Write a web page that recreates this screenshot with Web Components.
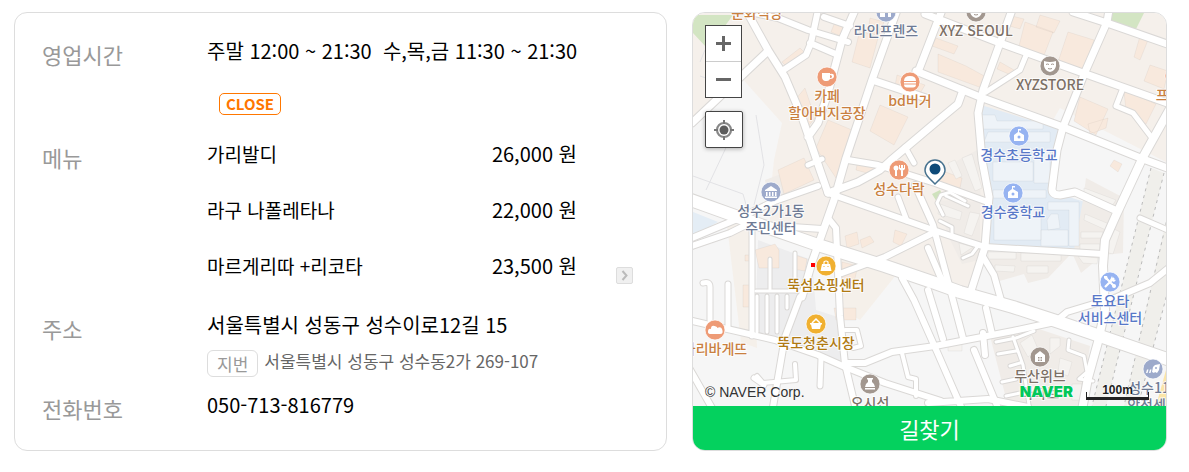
<!DOCTYPE html>
<html lang="ko">
<head>
<meta charset="utf-8">
<meta name="viewport" content="width=device-width, initial-scale=1">
<title>매장 정보</title>
<style>
    body {
        margin: 0;
        padding: 12px 22px 12px 14px;
        background: #fff;
        color: #000;
        font-family: "Noto Sans CJK KR", sans-serif;
    }
</style>
</head>
<body>
<shop-page>
    <shop-card slot="info">
        <info-row label="영업시간" space="25">
            <opening-hours status="CLOSE">주말 12:00 ~ 21:30 &nbsp;수,목,금 11:30 ~ 21:30</opening-hours>
        </info-row>
        <info-row label="메뉴" space="27"><menu-list></menu-list></info-row>
        <info-row label="주소" space="14">
            <shop-address lot="서울특별시 성동구 성수동2가 269-107">서울특별시 성동구 성수이로12길 15</shop-address>
        </info-row>
        <info-row label="전화번호">050-713-816779</info-row>
    </shop-card>
    <map-card slot="map"></map-card>
</shop-page>

<script>
class ShopPage extends HTMLElement {
    constructor() {
        super();
        this.attachShadow({ mode: 'open' }).innerHTML = `
        <style>
            :host { display: grid; grid-template-columns: 653fr 475fr; gap: 25px; }
        </style>
        <slot name="info"></slot><slot name="map"></slot>`;
    }
}
customElements.define('shop-page', ShopPage);

class ShopCard extends HTMLElement {
    constructor() {
        super();
        this.attachShadow({ mode: 'open' }).innerHTML = `
        <style>
            :host {
                display: block;
                box-sizing: border-box;
                padding: 24px 27px;
                border: 1px solid #ddd;
                border-radius: 13px;
            }
        </style>
        <slot></slot>`;
    }
}
customElements.define('shop-card', ShopCard);

class InfoRow extends HTMLElement {
    constructor() {
        super();
        this.attachShadow({ mode: 'open' }).innerHTML = `
        <style>
            :host {
                display: grid;
                grid-template-columns: 165px 1fr;
                font-size: 20px;
                line-height: 28px;
            }
            .label { font-size: 22px; line-height: 34px; color: #999; }
        </style>
        <div class="label" id="label"></div>
        <div role="group" aria-labelledby="label"><slot></slot></div>`;
    }
    connectedCallback() {
        this.shadowRoot.getElementById('label').textContent = this.getAttribute('label');
        this.style.marginBottom = (this.getAttribute('space') || 0) + 'px';
    }
}
customElements.define('info-row', InfoRow);

class OpeningHours extends HTMLElement {
    constructor() {
        super();
        this.attachShadow({ mode: 'open' }).innerHTML = `
        <style>
            :host { display: flex; flex-direction: column; align-items: flex-start; gap: 28px; }
            .status {
                margin-left: 12px;
                padding: 0 6px;
                border: 1px solid #f70;
                border-radius: 5px;
                color: #f70;
                font-size: 15px;
                font-weight: 700;
                line-height: 20px;
            }
        </style>
        <div><slot></slot></div>
        <div class="status"></div>`;
    }
    connectedCallback() {
        this.shadowRoot.querySelector('.status').textContent = this.getAttribute('status');
    }
}
customElements.define('opening-hours', OpeningHours);

class MenuList extends HTMLElement {
    constructor() {
        super();
        const items = [['가리발디', '26,000 원'], ['라구 나폴레타나', '22,000 원'], ['마르게리따 +리코타', '23,500 원']];
        this.attachShadow({ mode: 'open' }).innerHTML = `
        <style>
            :host { display: flex; align-items: flex-end; gap: 39px; }
            table { flex: 0 1 370px; border-collapse: collapse; margin-bottom: 4px; }
            th, td { padding: 0 0 28px; font-weight: 400; text-align: left; }
            th { font-size: 19px; }
            tr:last-child > * { padding-bottom: 0; }
            td { text-align: right; }
            button {
                display: grid;
                place-items: center;
                width: 17px;
                height: 17px;
                padding: 0;
                border: 1px solid #ddd;
                border-radius: 2px;
                background: #f0f0f0;
            }
        </style>
        <table><tbody>${items.map(([name, price]) => `<tr><th scope="row">${name}</th><td>${price}</td></tr>`).join('')}</tbody></table>
        <button type="button" aria-label="메뉴 더보기">
            <svg width="15" height="15" viewBox="0 0 15 15"><path d="M5.5 3l4 4.5-4 4.5" fill="none" stroke="#bbb" stroke-width="2"/></svg>
        </button>`;
    }
}
customElements.define('menu-list', MenuList);

class ShopAddress extends HTMLElement {
    constructor() {
        super();
        this.attachShadow({ mode: 'open' }).innerHTML = `
        <style>
            :host { display: block; }
            .lot { display: flex; gap: 6px; margin-top: 11px; font-size: 17px; line-height: 25px; }
            .tag { padding: 0 9px; border: 1px solid #ddd; border-radius: 6px; color: #999; }
            .text { line-height: 22px; color: #666; }
        </style>
        <slot></slot>
        <div class="lot"><span class="tag">지번</span><span class="text"></span></div>`;
    }
    connectedCallback() {
        this.shadowRoot.querySelector('.text').textContent = this.getAttribute('lot');
    }
}
customElements.define('shop-address', ShopAddress);

class MapCard extends HTMLElement {
    constructor() {
        super();
        this.attachShadow({ mode: 'open' }).innerHTML = `
        <style>
            :host {
                display: flex;
                flex-direction: column;
                box-sizing: border-box;
                overflow: hidden;
                border: 1px solid #ddd;
                border-radius: 13px;
            }
            .map { display: grid; flex: 1; }
            .map > * { grid-area: 1 / 1; }
            map-controls { place-self: start; margin: 12px; }
            map-legend { align-self: end; }
            .route {
                height: 44px;
                padding: 0;
                border: 0;
                background: #04d15e;
                color: #fff;
                font: 22px/44px "Noto Sans CJK KR", sans-serif;
            }
        </style>
        <div class="map">
            <street-map></street-map>
            <map-controls></map-controls>
            <map-legend></map-legend>
        </div>
        <button class="route" type="button">길찾기</button>`;
    }
}
customElements.define('map-card', MapCard);

class MapControls extends HTMLElement {
    constructor() {
        super();
        this.attachShadow({ mode: 'open' }).innerHTML = `
        <style>
            :host { display: grid; gap: 13px; }
            .zoom { width: 35px; border: 1px solid #444; background: #fff; }
            button { display: grid; place-items: center; padding: 0; border: 0; background: #fff; }
            .zoom button { width: 35px; height: 35px; }
            .zoom button + button { border-top: 1px solid #ccc; height: 36px; }
            .locate { width: 38px; height: 37px; border: 1px solid #444; border-radius: 2px; box-shadow: 0 1px 4px rgba(0, 0, 0, .3); }
        </style>
        <div class="zoom">
            <button type="button" aria-label="확대"><svg width="15" height="15"><path d="M0 7.5h15M7.5 0v15" stroke="#666" stroke-width="3"/></svg></button>
            <button type="button" aria-label="축소"><svg width="15" height="15"><path d="M0 7.5h15" stroke="#666" stroke-width="3"/></svg></button>
        </div>
        <button class="locate" type="button" aria-label="현재 위치">
            <svg width="20" height="20" viewBox="0 0 20 20">
                <circle cx="10" cy="10" r="7" fill="none" stroke="#888" stroke-width="2.200"/>
                <circle cx="10" cy="10" r="4.500" fill="#5c5c5c"/>
                <path d="M10 0v4M10 16v4M0 10h4M16 10h4" stroke="#777" stroke-width="2"/>
            </svg>
        </button>`;
    }
}
customElements.define('map-controls', MapControls);

class MapLegend extends HTMLElement {
    constructor() {
        super();
        this.attachShadow({ mode: 'open' }).innerHTML = `
        <style>
            :host { display: flex; align-items: center; padding: 0 17px 4px 12px; font-family: "Liberation Sans", Arial, sans-serif; color: #333; }
            .copy { flex: 1; font-size: 14px; line-height: 20px; text-shadow: 0 0 2px #fff; }
            .logo {
                margin-right: 13px;
                color: #03c75a;
                font: 900 15px/20px Inter, sans-serif;
                text-shadow: 0 0 1px #fff, 0 0 2px #fff, 0 0 2px #fff, 0 0 3px #fff;
            }
            .scale {
                box-sizing: border-box;
                width: 63px;
                text-align: center;
                font-size: 12px;
                font-weight: 700;
                line-height: 12px;
                color: #222;
                text-shadow: 0 0 2px #fff, 0 0 2px #fff;
            }
            .bar { box-sizing: border-box; height: 8px; margin-top: -4px; border: solid #222; border-width: 0 1px 3px; }
        </style>
        <span class="copy">© NAVER Corp.</span>
        <span class="logo">NAVER</span>
        <div class="scale">100m<div class="bar"></div></div>`;
    }
}
customElements.define('map-legend', MapLegend);

// [width, path], minor roads first so the wide ones run over them
const ROADS = [
    [3, 'M943 215l-6-12 4-8 10-3M946 196l22 10M951 193l14 8M940 221l12 6v8M978 246l-6 8-9 4'],
    [3, 'M756 291h45M757 296v12M767 296v12M777 296v12M787 296v12M757 302v30M767 302v30M777 302v30M770 259v30M795 253v38'],
    [3, 'M996 342l20-4 18-7M998 354l18-3M1002 382l14-3M1006 396l14-3M1013 337l10 28 6 40M1069 340l-1 10 16 6 3 16-8 7 14 2M1010 366l10-3'],
    [4, 'M845 330h12l4 16-8 2M902 353l6 24 8 2v17M757 376l6 7 33-3-1-16'],
    [5, 'M703 283q7-2 7 4v33M728 284v44M821 358l-1 28M754 378l10 7M752 228v108'],
    [6, 'M740 10l38 8 30 12 40 12M818 10l-7 33-5 12-24 16M810 43l28 12M824 17l26 9'],
    [5, 'M1027 53l-7 17-34 22M1123 88l-7 18 17 7 19 25M808 165l14-6M905 147l9 16M898 197l9 24M1140 218l30 13'],
    [6, 'M792 227l30 2M828 218l8 10 1 22 3 66 5 48 11 46M933 233l-48 24-43 16M800 297l-15 40-12 70'],
    [6, 'M692 246l38-13 22-11M915 185l18 40 16 60 14 53M928 248l15 35M928 290l15 49M982 255l12 20 7 25M986 308l6 26M983 333l2 22M974 350l24 58'],
    [6, 'M902 278l12 22 24 54 24 55M688 366l24 42M928 403l60-4 40 8'],
    [6, 'M688 320l87 20 43 15 27 12 40 16 56 18M845 363h20l27-11 43-6 78-15 42-9 12-10 50-15 33-14 20-16'],
    [7, 'M692 123l76-72M746 10l22 40 17 27 17 40 18 53 8 23M855 10l-13 30-14 53-10 30-10 14'],
    [7, 'M897 10l-25 70-26 78-12 42-12 34-10 28-10 35M872 80l54 18M828 193l30-11 22-12 10-9 45-38 23-19 5-14'],
    [6, 'M848 160l30 5 57 18 50 18M828 193l57 20 48 17 30 10 22 7 118 7M692 238l43-18 40-19 43-15'],
    [7, 'M942 10l-24 62M1012 10l-12 33-17 47-5 23 4 47 7 37-4 50-14 44M1109 10l-2 12-22 50-22 55-6 23-5 39q0 6 8 6l15-3 42 19'],
    [7, 'M925 14l75 29 83 30 87 31M916 71l64 26 83 30 80 32 27 10M1073 12l34 11 63 22'],
    [8, 'M1172 105l-29 52-26 56-12 27-2 26 2 44-7 32-10 36-6 32'],
    [12, 'M688 199l64 23 66 23 67 21 50 17 25 9 53 15 43 14 114 39']
];

const BUILDINGS = {
    '#f8e9dd': 'M782 62l18-14 8 8-18 14zM860 30l18 8-8 30-18-6zM880 105l28 12-14 28-24-14zM828 120l24 10-16 48-20-30zM835 22l14 6-4 10-14-6zM870 18l14 4-6 14-10-4zM1025 22l28 10-10 26-24-12zM1068 32l26 8-12 34-24-12zM1040 15l20 6-6 12-18-6zM936 38l22 8-4 8-22-8zM938 54l28 12 22 12-6 10-44-16zM1080 97l28 12-12 26-22-14zM1124 90l32 14-10 20-20-12zM1140 36l8 4-8 20-6-3zM1008 15l16 4-4 10-14-4zM1000 62l14 8-3 5-14-6zM778 170l26-12 10 22-30 14zM858 160l24 8-4 8-22-6zM845 236l12-4 2 12-12 4zM842 262l16 4-4 16-12 2zM834 308h22v12h-20zM1088 124l20-6-2 10-16 6zM1114 160l8 4-4 8-8-6zM940 170l22 8-2 10-22-6zM895 230l12 4-6 12-8-4zM745 255h8v6h-8zM743 285h8v22h-8zM860 240l10-4 4 6-12 6zM735 215l14-6 4 6-14 8zM795 255l12 4-2 12-12-2zM1150 65l18 6-4 18-20-8zM805 88l10 30-8 10-12-28zM897 75l28 10-6 10-24-9zM755 250l20-6 4 6v18h-20z',
    '#f5f3f0': 'M948 163l7-3 7 16-6 3zM962 158l10-4 10 34-7 3zM940 204l22 8-2 8-22-6zM970 212l10 2-8 22-8-3zM959 243l14 4-12 8zM988 252h28v7h-28zM1021 253h40v8h-40zM995 265l20 1-1 6-19-1zM1027 266h21v7h-21zM1078 256l20 2-1 6-14-1zM1081 232h22v6h-22zM1085 214l24 10-3 6-22-10zM1084 188l32 12-4 6-28-12zM1112 228l8 4-7 22-8-2zM1080 244h20v7h-20zM948 343h14v8h-14zM1020 343l12-8 6 14-10 8zM1050 338h10v8l-10 8zM1060 358l12 4-4 14-10-4zM1072 384h10v16h-10z',
    '#eef3f8': 'M981 115h14l2 6h46v8h-60zM988 132h62v10h-66zM993 162h40v19h-40zM1034 150h16v33h-16zM993 190h53v8h-53zM994 210h47v30h-47zM1048 202h31v44h-10v-36h-21zM1047 220l4-6h7l2 14-12 2zM1041 230h27v16h-27z'
};

const CORAL = '#ee9b76', BLUE = '#96b3f1', TAUPE = '#a2978f', SLATE = '#9daacb', GOLD = '#f0b030';
const GLYPHS = {
    cup: '<path d="M-5-4h8v1q4-1 4 2t-4 3q-1 2-3 2h-2q-3-1-3-4zM3-2v3q2 0 2-1.500t-2-1.500" fill-rule="evenodd"/>',
    burger: '<path d="M-6-1q0-5 6-5t6 5zM-6 0H6v1.500H-6zM-6 2.500H6q0 3-3 3h-6q-3 0-3-3z"/>',
    building: '<path d="M-6 5v-8h4v-3h7v11h-3V1h-3v4z"/><path d="M-4-1h1v1h-1zM-1-3h1v2h-1zM2-3h1v2H2z" fill="#9daacb"/>',
    mask: '<path d="M-6-5q6 2 12 0v5q-1 5-6 6-5-1-6-6z"/><path d="M-4-1.500q1.500-1 3 0M1-1.500q1.500-1 3 0M-2 2.500q2 1 4 0" fill="none" stroke="#a2978f"/>',
    school: '<path d="M-5 5v-6l4-3v-3h3v1.500H0V-4l5 3v6z"/><circle cy="1" r="1.500" fill="#96b3f1"/>',
    fork: '<circle cx="-3" cy="-2" r="2.500"/><path d="M-4 0h2v6h-2zM2 0h2v6H2zM0-5h1v3h1v-3h2v3h1v-3h1v4q-3 3-6 0z"/>',
    hall: '<path d="M-6-2l6-4 6 4v1H-6zM-5 0h1.500v4H-5zM-2 0h1.500v4H-2zM1 0h1.500v4H1zM4 0h1.500v4H4zM-6 4.500H6V6H-6z"/>',
    bag: '<path d="M-4-2H4l1.500 7h-11z"/><path d="M-2-1v-3q2-2 4 0v3" fill="none" stroke="#fff" stroke-width="1.200"/><path d="M-2 0v1M2 0v1" stroke="#f0b030"/>',
    basket: '<path d="M-6-1H6v1.500H5L4 5h-8l-1-4.500h-1z"/><path d="M-4-1l4-4 4 4" fill="none" stroke="#fff" stroke-width="1.500"/>',
    bread: '<path d="M-7 2q0-4 3-3 0-4 3.500-3t2.500 2q4-2 5 1 2 5-2 5h-9q-3 0-3-2z"/>',
    tools: '<path d="M-5 5L4-4M-5-5L5 5" stroke="#fff" stroke-width="2.200"/><path d="M2-6l1 3 3 1-2 2-4-2zM-6-6h3l1 3-2 1-2-2z"/><circle cx="4" cy="4" r="2"/>',
    house: '<path d="M-5 5v-7l5-4 5 4v7z"/><path d="M-2 0h1.500v1.500H-2zM.500 0H2v1.500H.500zM-2 2.500h1.500V4H-2zM.500 2.500H2V4H.500z" fill="#a2978f"/>',
    pot: '<path d="M-3-6h6v1.500H2V-2q3 2 3 5H-5q0-3 3-5v-2.500h-1zM-5 4H5v1.500H-5z"/>',
    siren: '<path d="M-7 4l1-3.500h1.500l-1 3.500zM-4 4l1-3.500h1.500l-1 3.500zM-1 3l1-5 2-2 5-1-1 6-2 3-2-1-1 1z"/><circle cx="3" cy="-1" r="1" fill="#9daacb"/>'
};

// x, y, colour of the disc, colour of the label, glyph, label lines
const PINS = [
    [757, -6, CORAL, '#c9803f', 'fork', '문화식당'],
    [886, 12, SLATE, '#6e7a94', 'building', '라인프렌즈'],
    [976, 12, TAUPE, '#7c7066', 'mask', 'XYZ SEOUL'],
    [827, 77, CORAL, '#c9803f', 'cup', '카페', '할아버지공장'],
    [910, 82, CORAL, '#c9803f', 'burger', 'bd버거'],
    [1050, 66, TAUPE, '#7c7066', 'mask', 'XYZSTORE'],
    [1175, 76, CORAL, '#c9803f', 'fork', '프롤라'],
    [1019, 136, BLUE, '#5878c8', 'school', '경수초등학교'],
    [899, 170, CORAL, '#c9803f', 'fork', '성수다락'],
    [1013, 193, BLUE, '#5878c8', 'school', '경수중학교'],
    [771, 192, SLATE, '#6e7a94', 'hall', '성수2가1동', '주민센터'],
    [826, 266, GOLD, '#b07a12', 'bag', '뚝섬쇼핑센터'],
    [816, 324, GOLD, '#b07a12', 'basket', '뚝도청춘시장'],
    [715, 330, CORAL, '#c9803f', 'bread', '파리바게뜨'],
    [1110, 282, BLUE, '#5878c8', 'tools', '토요타', '서비스센터'],
    [1040, 357, TAUPE, '#7c7066', 'house', '두산위브', '아파트'],
    [870, 384, TAUPE, '#7c7066', 'pot', '오시선'],
    [1153, 369, SLATE, '#6e7a94', 'siren', '성수119', '안전센터']
];

class StreetMap extends HTMLElement {
    constructor() {
        super();
        const stroke = (color, extra) => ROADS.map(([w, d]) => `<path d="${d}" stroke="${color}" stroke-width="${w + extra}"/>`).join('');
        const pin = ([x, y, disc, ink, glyph, ...lines]) => `
            <g transform="translate(${x} ${y})">
                <circle r="10" fill="${disc}" stroke="#fff" stroke-opacity=".7"/>
                <g fill="#fff">${GLYPHS[glyph]}</g>
                ${lines.map((line, i) => `<text y="${24 + i * 17}" fill="${ink}">${line}</text>`).join('')}
            </g>`;
        this.attachShadow({ mode: 'open' }).innerHTML = `
        <style>
            :host { display: block; min-width: 0; }
            svg { display: block; width: 100%; height: 393px; }
            .roads { fill: none; stroke-linecap: round; stroke-linejoin: round; }
            text {
                font: 500 14px "Noto Sans CJK KR", sans-serif;
                text-anchor: middle;
                stroke: #fff;
                stroke-width: 2px;
                stroke-opacity: .8;
                stroke-linejoin: round;
                paint-order: stroke;
            }
        </style>
        <svg viewBox="693 13 473 393" preserveAspectRatio="xMidYMid slice" role="img" aria-label="매장 주변 지도">
            <path d="M693 13h473v393H693z" fill="#f5f0eb"/>
            <path d="M693 120l46-45 43 48-8 37-5 45 2 28-78-32zM693 240l55-18 70 25 75 25 78 25 195 60v49H693zM1060 108l106 54v200l-153-52-45-18 20-60zM693 205l55 20-55 15z" fill="#f6f6f6"/>
            <path d="M727 225l26-2 4 125-16-6zM840 250l60 20-40 50-20-12z" fill="#f5f0ea"/>
            <path d="M758 240l54 20 4 50 25 8 4 48-30-12-60-20z" fill="#ededee"/>
            <path d="M693 15h40l-22 30-5 2-13-14zM1112 13h32l-8 16-26-8z" fill="#d3e5c3"/>
            <path d="M932 194l8-4 3 6-6 6z" fill="#cfe2bd"/>
            <path d="M981 105l79 24-4 64 29 9-7 47-90-3 1-50z" fill="#e2ebf4"/>
            <path d="M693 212l25 10-25 14z" fill="#e4edf5"/>
            <path d="M1086 178l38 20-1 55-20 2-22 18-8-18 10-55zM987 251l82 5-21 22-20 5-4-9-28 8zM955 162l22-12 4 50-20-8zM938 200l42 2v58l-18 4-14-28zM990 336l40-10 60 20-10 60h-72zM765 180l16-6 6 22-18 6z" fill="#f0ece8"/>
            <path d="M1151 168l13 5-58 233h-14zM1166 221v76l-28 109h-14z" fill="#f0efeb"/>
            <path d="M1166 370l-10 36h10z" fill="#fbe5a8"/>
            <g fill="none" stroke="#e2e2e5"><path d="M706 190l34-72M756 115l8 50-10 40M693 176l50 18 8 28M700 62l5-12 4 14-3 14-6-2"/></g>
            ${Object.entries(BUILDINGS).map(([fill, d]) => `<path d="${d}" fill="${fill}" stroke="#000" stroke-opacity=".04"/>`).join('')}
            <path d="M1151 168l-59 238M1164 173l-58 233M1168 215l-44 191M1168 290l-30 116" fill="none" stroke="#bbb" stroke-dasharray="3 4"/>
            <g class="roads">${stroke('#dad8d6', 2)}${stroke('#fff', 0)}</g>
            ${PINS.map(pin).join('')}
            <path d="M811 263h4v4h-4z" fill="#f00"/>
            <path d="M935 184l-6-6q-4-4-4-8a10 10 0 0 1 20 0q0 4-4 8z" fill="#fff" stroke="#47728f" stroke-width="1.500"/>
            <circle cx="935" cy="169" r="5.500" fill="#0d4a78"/>
        </svg>`;
    }
}
customElements.define('street-map', StreetMap);
</script>
</body>
</html>
